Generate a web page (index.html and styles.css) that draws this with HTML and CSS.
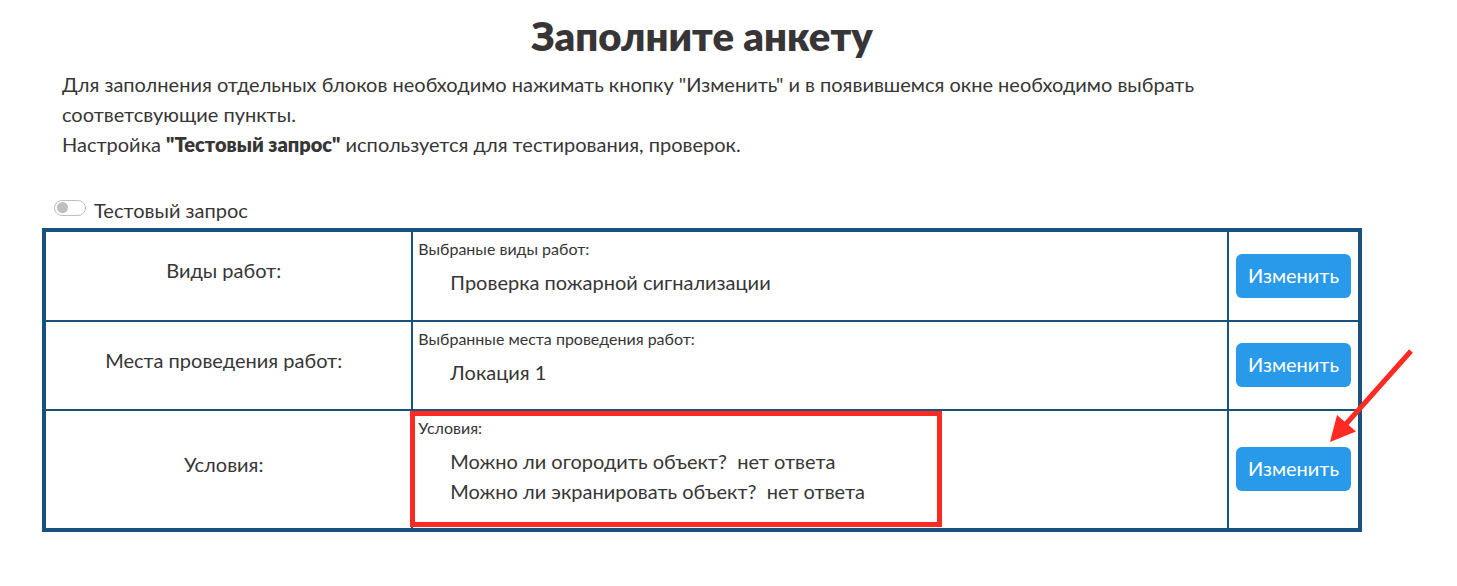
FILE: index.html
```html
<!DOCTYPE html>
<html lang="ru">
<head>
<meta charset="utf-8">
<meta name="viewport" content="width=device-width, initial-scale=1">
<title>Заполните анкету</title>
<link rel="stylesheet" href="styles.css">
</head>
<body>
<main class="page">
  <h1 class="title">Заполните анкету</h1>
  <div class="intro">
    <p>Для заполнения отдельных блоков необходимо нажимать кнопку "Изменить" и в появившемся окне необходимо выбрать<br>соответсвующие пункты.</p>
    <p>Настройка <strong>"Тестовый запрос"</strong> используется для тестирования, проверок.</p>
  </div>
  <div class="test-row">
    <input class="switch" type="checkbox" role="switch" id="test-request">
    <label for="test-request">Тестовый запрос</label>
  </div>
  <table class="form-table">
    <colgroup><col class="col-name"><col><col class="col-action"></colgroup>
    <tbody>
      <tr class="first-row">
        <th class="name" scope="row">Виды работ:</th>
        <td class="value">
          <div class="caption">Выбраные виды работ:</div>
          <ul class="items"><li>Проверка пожарной сигнализации</li></ul>
        </td>
        <td class="action"><button class="edit" type="button">Изменить</button></td>
      </tr>
      <tr>
        <th class="name" scope="row">Места проведения работ:</th>
        <td class="value">
          <div class="caption">Выбранные места проведения работ:</div>
          <ul class="items"><li>Локация 1</li></ul>
        </td>
        <td class="action"><button class="edit" type="button">Изменить</button></td>
      </tr>
      <tr>
        <th class="name" scope="row">Условия:</th>
        <td class="value">
          <div class="caption">Условия:</div>
          <ul class="items">
            <li>Можно ли огородить объект?&nbsp; нет ответа</li>
            <li>Можно ли экранировать объект?&nbsp; нет ответа</li>
          </ul>
          <div class="highlight"></div>
        </td>
        <td class="action">
          <button class="edit" type="button">Изменить</button>
          <svg class="arrow" width="84" height="94" viewBox="0 0 84 94" aria-hidden="true">
            <path d="M81 2 L16 75" stroke="#ff2a21" stroke-width="5" fill="none"/>
            <path d="M0 93 L7 66 L26 82.500 Z" fill="#ff2a21"/>
          </svg>
        </td>
      </tr>
    </tbody>
  </table>
</main>
</body>
</html>
```
FILE: styles.css
```css
* { box-sizing: border-box; }

body {
  margin: 0;
  background: #fff;
  color: #373536;
  font-family: Lato, Roboto, "Noto Sans", sans-serif;
  font-size: 20px;
  line-height: 30px;
}

.page { padding: 11px 95px 40px 42px; }

.title {
  margin: 0 0 8px;
  font-size: 40px;
  line-height: 50px;
  font-weight: 800;
  text-align: center;
}

.intro { padding: 0 20px; }
.intro p { margin: 0; }
.intro strong { font-weight: 800; }

.test-row {
  display: flex;
  align-items: center;
  gap: 8px;
  margin-top: 36px;
  padding-left: 12px;
}

.switch {
  appearance: none;
  display: flex;
  align-items: center;
  width: 32px;
  height: 16px;
  margin: 0 0 5px;
  padding: 0 2px;
  border: 1px solid #bfbfbf;
  border-radius: 8px;
  background: #fff;
}
.switch::before {
  content: "";
  width: 11px;
  height: 11px;
  border-radius: 50%;
  background: #bfbfbf;
}
.switch:checked { justify-content: flex-end; }

.form-table {
  width: 100%;
  margin-top: 3px;
  table-layout: fixed;
  border: 4px solid #17517c;
  border-spacing: 0;
}
.col-name { width: 28%; }
.col-action { width: 129px; }

.form-table th,
.form-table td {
  border-right: 2px solid #17517c;
  border-bottom: 2px solid #17517c;
}
.form-table tr > :last-child { border-right: 0; }
.form-table tr:last-child > * { border-bottom: 0; }
.first-row { height: 90px; }

.name {
  padding: 0 20px 12px 10px;
  font-weight: 400;
  text-align: center;
}
.value {
  position: relative;
  padding: 2px 5px 22px;
  vertical-align: top;
}
.caption {
  margin-bottom: 3px;
  font-size: 16px;
}
.items {
  margin: 0;
  padding: 0 0 0 32px;
  list-style: none;
}
.action {
  position: relative;
  padding: 0 7px 1px;
}

.edit {
  display: block;
  width: 100%;
  height: 44px;
  padding: 0 0 2px;
  border: 0;
  border-radius: 6px;
  background: #2999ea;
  color: #fff;
  font: inherit;
}

.highlight {
  position: absolute;
  top: 0;
  left: -3px;
  width: 532px;
  height: 116px;
  border: 5px solid #ff2a21;
}
.arrow {
  position: absolute;
  top: -62px;
  left: 101px;
}
```
